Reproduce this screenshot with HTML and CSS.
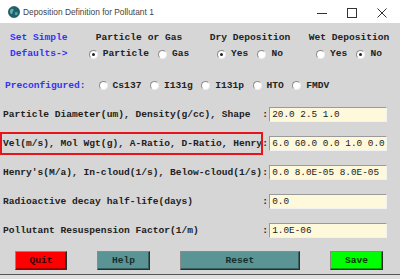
FILE: index.html
```html
<!DOCTYPE html>
<html lang="en">
<head>
	<meta charset="UTF-8">
	<title>Deposition Definition</title>
	<link rel="stylesheet" href="styles.css">
</head>
<body>
	<div class="window">
		<div class="titlebar">
			<svg class="appicon" width="12" height="12" viewBox="0 0 12 12">
				<circle cx="6" cy="6" r="5.6" fill="#1f5f6e"/>
				<path d="M2.2 4.2 C3.5 2.4 5.2 2.6 5.6 3.8 C5.9 5 4.4 5.2 4.6 6.6 C4.8 7.8 3.4 8.4 2.6 7.4 C1.9 6.5 1.7 5 2.2 4.2 Z" fill="#5fb3a8"/>
				<path d="M7 6.4 C8 5.6 9.6 6 9.8 7.2 C9.9 8.4 8.6 9.6 7.6 9.2 C6.8 8.8 6.4 7 7 6.4 Z" fill="#4fa596"/>
				<circle cx="6" cy="6" r="5.6" fill="none" stroke="#163f4a" stroke-width="0.6"/>
			</svg>
			<span class="title">Deposition Definition for Pollutant 1</span>
			<div class="controls">
				<svg width="30" height="23" viewBox="0 0 30 23"><path d="M10 13.5 H20" stroke="#333" stroke-width="1"/></svg>
				<svg width="30" height="23" viewBox="0 0 30 23"><rect x="10.5" y="8.5" width="9" height="9" fill="none" stroke="#333" stroke-width="1"/></svg>
				<svg width="30" height="23" viewBox="0 0 30 23"><path d="M10.5 8.5 L19.5 17.5 M19.5 8.5 L10.5 17.5" stroke="#333" stroke-width="1"/></svg>
			</div>
		</div>

		<div class="panel">
			<div class="defaults">
				<div class="col col-label">
					<div class="blue">Set Simple</div>
					<div class="blue">Defaults-&gt;</div>
				</div>
				<div class="col col-type">
					<div>Particle or Gas</div>
					<div class="opts">
						<label class="opt"><span class="radio on"></span>Particle</label>
						<label class="opt"><span class="radio"></span>Gas</label>
					</div>
				</div>
				<div class="col col-dry">
					<div>Dry Deposition</div>
					<div class="opts">
						<label class="opt"><span class="radio on"></span>Yes</label>
						<label class="opt"><span class="radio"></span>No</label>
					</div>
				</div>
				<div class="col col-wet">
					<div>Wet Deposition</div>
					<div class="opts">
						<label class="opt"><span class="radio"></span>Yes</label>
						<label class="opt"><span class="radio on"></span>No</label>
					</div>
				</div>
			</div>

			<div class="preset">
				<span class="blue">Preconfigured:</span>
				<div class="opts">
					<label class="opt"><span class="radio"></span>Cs137</label>
					<label class="opt"><span class="radio"></span>I131g</label>
					<label class="opt"><span class="radio"></span>I131p</label>
					<label class="opt"><span class="radio"></span>HTO</label>
					<label class="opt"><span class="radio"></span>FMDV</label>
				</div>
			</div>

			<div class="fields">
				<div class="field">
					<span class="label">Particle Diameter(um), Density(g/cc), Shape</span><span class="colon">:</span>
					<span class="input">20.0 2.5 1.0</span>
				</div>
				<div class="field">
					<span class="label marked">Vel(m/s), Mol Wgt(g), A-Ratio, D-Ratio, Henry</span><span class="colon">:</span>
					<span class="input">6.0 60.0 0.0 1.0 0.0</span>
				</div>
				<div class="field">
					<span class="label">Henry's(M/a), In-cloud(1/s), Below-cloud(1/s)</span><span class="colon">:</span>
					<span class="input">0.0 8.0E-05 8.0E-05</span>
				</div>
				<div class="field">
					<span class="label">Radioactive decay half-life(days)</span><span class="colon">:</span>
					<span class="input">0.0</span>
				</div>
				<div class="field">
					<span class="label">Pollutant Resuspension Factor(1/m)</span><span class="colon">:</span>
					<span class="input">1.0E-06</span>
				</div>
			</div>

			<div class="buttons">
				<button class="btn quit">Quit</button>
				<button class="btn help">Help</button>
				<button class="btn reset">Reset</button>
				<button class="btn save">Save</button>
			</div>
		</div>
		<div class="edge"></div>
	</div>
</body>
</html>
```

FILE: styles.css
```css
body,div{margin:0;padding:0;}
body{
	background: #fff;
	font-family: "Liberation Mono", "DejaVu Sans Mono", monospace;
	font-size: 9.6px;
	font-weight: bold;
	color: #222;
}
.window{
	width: 400px;
	height: 279px;
	display: flex;
	flex-direction: column;
}

/* title bar */
.titlebar{
	height: 23px;
	display: flex;
	align-items: center;
	background: #fff;
	font-family: "Liberation Sans", Arial, sans-serif;
	font-weight: normal;
}
.appicon{
	margin-left: 8px;
	margin-top: 1px;
}
.title{
	margin-left: 3px;
	font-size: 8.4px;
	color: #444;
}
.controls{
	margin-left: auto;
	margin-right: 3px;
	display: flex;
}
.controls svg{display: block;}

/* grey body */
.panel{
	flex: 1;
	background: #d6d6d6;
	display: flex;
	flex-direction: column;
}
.blue{color: #3434f4;}

.defaults{
	display: flex;
	padding: 7px 0 0 10px;
	line-height: 16px;
}
.col{
	display: flex;
	flex-direction: column;
	align-items: center;
	white-space: pre;
}
.col-label{width: 78px; align-items: flex-start;}
.col-type{width: 102px;}
.col-dry{width: 120px;}
.col-wet{width: 78px;}

.opts{
	display: flex;
	align-items: center;
	gap: 9px;
}
.opt{
	display: flex;
	align-items: center;
	gap: 5px;
}
.radio{
	width: 9px;
	height: 9px;
	box-sizing: border-box;
	border-radius: 50%;
	background: #fff;
	border: 1px solid;
	border-color: #8c8c8c #ececec #ececec #8c8c8c;
	display: inline-flex;
	align-items: center;
	justify-content: center;
}
.radio.on::after{
	content: "";
	width: 3px;
	height: 3px;
	border-radius: 50%;
	background: #222;
}

.preset{
	display: flex;
	align-items: center;
	height: 16px;
	margin-top: 15px;
	padding-left: 5px;
	gap: 13px;
}
.preset .opts{gap: 8.5px;}

.fields{
	margin-top: 7px;
	display: flex;
	flex-direction: column;
}
.field{
	height: 29px;
	display: flex;
	align-items: center;
	padding-left: 3px;
	white-space: pre;
}
.label{
	width: 259.2px;
	position: relative;
}
.label.marked::after{
	content: "";
	position: absolute;
	left: -3px;
	right: -1px;
	top: -6px;
	bottom: -6px;
	border: 2px solid #e8141c;
}
.colon{width: 6px;}
.input{
	margin-left: 1px;
	width: 118px;
	height: 15px;
	box-sizing: border-box;
	background: #fff9dc;
	border: 1px solid;
	border-color: #9a9a9a #f2f2f2 #f2f2f2 #9a9a9a;
	padding-left: 2px;
	font-weight: normal;
	font-size: 9.4px;
	line-height: 13px;
	color: #1a1a1a;
}

.buttons{
	margin-top: 6px;
	padding-left: 15px;
	display: flex;
	gap: 30px;
}
.btn{
	height: 19px;
	width: 53px;
	padding: 0;
	font-family: inherit;
	font-size: 9.6px;
	font-weight: bold;
	border: 1px solid;
	border-color: #8a8a8a #2c2c2c #2c2c2c #8a8a8a;
	box-shadow: inset -1px -1px 0 rgba(0,0,0,0.35);
}
.quit{background: #ff0000; color: #3a0000; width: 52px;}
.help{background: #5b9494; color: #14302e;}
.reset{background: #5b9494; color: #14302e; width: 120px;}
.save{background: #00ff00; color: #053805;}

.edge{
	height: 4px;
	border-top: 1px solid #555;
	background: #e0e0e0;
}
```
